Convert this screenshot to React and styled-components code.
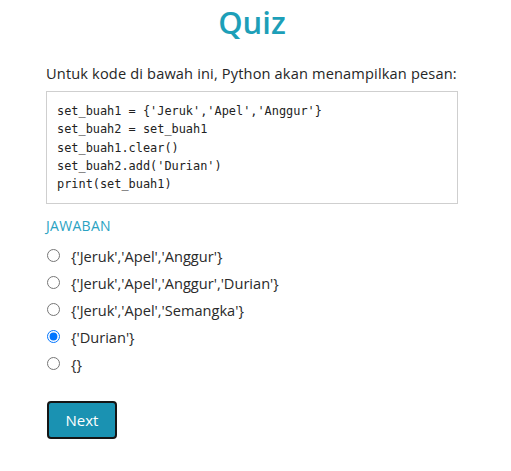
import React, { useState } from "react";
import styled, { createGlobalStyle } from "styled-components";

const Global = createGlobalStyle`
  html, body { margin: 0; padding: 0; background: #fff; }
  body { font-family: "Open Sans", "Noto Sans", sans-serif; color: #222; }
`;

const Page = styled.div`
  width: 412px;
  padding-left: 46px;
  display: flex;
  flex-direction: column;
`;

const Title = styled.h1`
  margin: 0;
  height: 44px;
  line-height: 44px;
  text-align: center;
  font-size: 31px;
  font-weight: 600;
  color: #1d9fb8;
`;

const Question = styled.p`
  margin: 19px 0 0;
  line-height: 20px;
  font-size: 14.6px;
  letter-spacing: 0.15px;
  color: #262626;
`;

const Code = styled.pre`
  margin: 8px 0 0;
  border: 1px solid #cfcfcf;
  padding: 10px;
  font-family: "DejaVu Sans Mono", "Liberation Mono", monospace;
  font-size: 11.9px;
  line-height: 18.3px;
  color: #222;
`;

const Label = styled.div`
  margin-top: 12px;
  line-height: 20px;
  font-size: 14px;
  color: #2aa2c2;
  letter-spacing: 0.3px;
`;

const Options = styled.div`
  margin-top: 6px;
  display: flex;
  flex-direction: column;
`;

const Option = styled.label`
  display: flex;
  align-items: center;
  height: 27px;
  gap: 11px;
  font-size: 14.6px;
  color: #2a2a2a;
  cursor: pointer;
`;

const Radio = styled.input`
  margin: 0 0 0 1px;
  width: 13px;
  height: 13px;
  accent-color: #0075ff;
`;

const NextButton = styled.button`
  margin-top: 24px;
  align-self: flex-start;
  margin-left: 1px;
  width: 70px;
  height: 38px;
  background: #1a92b2;
  color: #fff;
  border: 2px solid #151515;
  border-radius: 4px;
  font-family: "Open Sans", sans-serif;
  font-size: 15px;
  font-weight: 500;
`;

const answers = [
  "{'Jeruk','Apel','Anggur'}",
  "{'Jeruk','Apel','Anggur','Durian'}",
  "{'Jeruk','Apel','Semangka'}",
  "{'Durian'}",
  "{}",
];

export default function App() {
  const [sel, setSel] = useState(3);
  return (
    <>
      <Global />
      <Page>
        <Title>Quiz</Title>
        <Question>Untuk kode di bawah ini, Python akan menampilkan pesan:</Question>
        <Code>{`set_buah1 = {'Jeruk','Apel','Anggur'}
set_buah2 = set_buah1
set_buah1.clear()
set_buah2.add('Durian')
print(set_buah1)`}</Code>
        <Label>JAWABAN</Label>
        <Options>
          {answers.map((a, i) => (
            <Option key={i}>
              <Radio type="radio" name="ans" checked={sel === i} onChange={() => setSel(i)} />
              {a}
            </Option>
          ))}
        </Options>
        <NextButton>Next</NextButton>
      </Page>
    </>
  );
}
